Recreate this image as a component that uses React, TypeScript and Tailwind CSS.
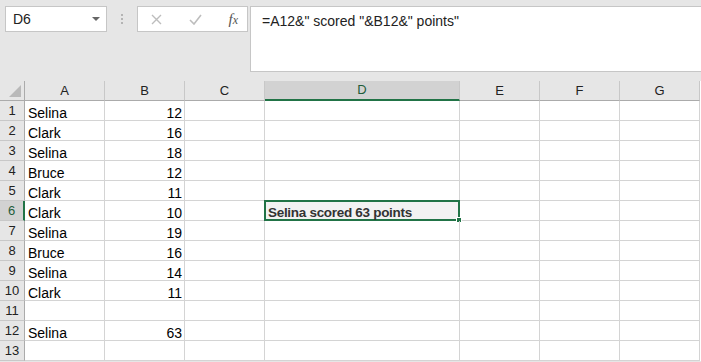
import { Fragment } from 'react';

const columns = [
    { key: 'A', width: 80 },
    { key: 'B', width: 80 },
    { key: 'C', width: 80 },
    { key: 'D', width: 195 },
    { key: 'E', width: 80 },
    { key: 'F', width: 80 },
    { key: 'G', width: 80 },
];

const rows: { a?: string; b?: string }[] = [
    { a: 'Selina', b: '12' },
    { a: 'Clark', b: '16' },
    { a: 'Selina', b: '18' },
    { a: 'Bruce', b: '12' },
    { a: 'Clark', b: '11' },
    { a: 'Clark', b: '10' },
    { a: 'Selina', b: '19' },
    { a: 'Bruce', b: '16' },
    { a: 'Selina', b: '14' },
    { a: 'Clark', b: '11' },
    {},
    { a: 'Selina', b: '63' },
    {},
];

const ColumnHeader = ({ label, active }: { label: string; active?: boolean }) => (
    <div
        className={`h-[20px] flex items-center justify-center text-[13px] border-r border-[#c8c8c8] ${active ? 'bg-[#d2d2d2] text-[#1e5c3a] border-b-2 border-b-[#217346]' : 'bg-[#e6e6e6] text-[#222] border-b border-b-[#ababab]'}`}
    >
        {label}
    </div>
);

const FormulaButtons = () => (
    <div className="w-[111px] h-[26px] bg-white border border-[#c6c6c6] flex items-center justify-between pl-[13px] pr-[9px]">
        <svg width="11" height="11" viewBox="0 0 11 11">
            <path d="M1 1 L10 10 M10 1 L1 10" stroke="#bdbdbd" strokeWidth="1.4" />
        </svg>
        <svg width="13" height="11" viewBox="0 0 13 11">
            <path d="M1 6 L5 10 L12 1" stroke="#bdbdbd" strokeWidth="1.6" fill="none" />
        </svg>
        <span className="text-[15px] italic text-[#555]" style={{ fontFamily: '"Liberation Serif", serif' }}>
            f<span className="text-[12px]">x</span>
        </span>
    </div>
);

export default function App() {
    return (
        <div className="w-[701px] h-[362px] overflow-hidden bg-[#e6e6e6]" style={{ fontFamily: '"Liberation Sans", Arial, sans-serif' }}>
            {/* toolbar */}
            <div className="h-[81px] flex items-start pt-[6px]">
                <div className="ml-[5px] w-[102px] h-[26px] bg-white border border-[#c6c6c6] flex items-center justify-between pl-[7px] pr-[6px]">
                    <span className="text-[14px] text-[#222]">D6</span>
                    <svg width="8" height="5" viewBox="0 0 8 5">
                        <path d="M0 0 H8 L4 4 Z" fill="#666" />
                    </svg>
                </div>
                <div className="w-[30px] h-[26px] flex flex-col items-center justify-center gap-[2px]">
                    <div className="w-[2px] h-[2px] bg-[#b4b4b4]" />
                    <div className="w-[2px] h-[2px] bg-[#b4b4b4]" />
                    <div className="w-[2px] h-[2px] bg-[#b4b4b4]" />
                </div>
                <FormulaButtons />
                <div className="ml-[2px] flex-1 h-[66px] bg-white border border-[#c6c6c6] border-r-0 pl-[11px] pt-[4px] text-[14px] text-[#222]">
                    =A12&amp;" scored "&amp;B12&amp;" points"
                </div>
            </div>

            {/* sheet */}
            <div className="grid bg-white" style={{ gridTemplateColumns: '25px 80px 80px 80px 195px 80px 80px 80px' }}>
                <div className="h-[20px] bg-[#e6e6e6] border-r border-[#ababab] border-b border-b-[#ababab] flex items-end justify-end p-[3px]">
                    <svg width="12" height="12" viewBox="0 0 12 12">
                        <path d="M12 0 V12 H0 Z" fill="#b9b9b9" />
                    </svg>
                </div>
                {columns.map(c => (
                    <ColumnHeader key={c.key} label={c.key} active={c.key === 'D'} />
                ))}

                {rows.map((r, i) => {
                    const n = i + 1;
                    const active = n === 6;
                    return (
                        <Fragment key={n}>
                            <div
                                className={`h-[20px] flex items-center justify-center text-[13px] border-b border-[#c8c8c8] ${active ? 'bg-[#d2d2d2] text-[#1e5c3a] border-r-2 border-r-[#217346]' : 'bg-[#e6e6e6] text-[#222] border-r border-r-[#ababab]'}`}
                            >
                                {n}
                            </div>
                            <div className="h-[20px] border-r border-b border-[#d4d4d4] pl-[3px] flex items-end leading-none text-[14px] text-black">
                                {r.a}
                            </div>
                            <div className="h-[20px] border-r border-b border-[#d4d4d4] pr-[2px] flex items-end justify-end leading-none text-[14px] text-black">
                                {r.b}
                            </div>
                            <div className="h-[20px] border-r border-b border-[#d4d4d4]" />
                            <div className="h-[20px] border-r border-b border-[#d4d4d4] relative">
                                {active && (
                                    <div className="absolute -left-[1px] -top-[1px] -right-[1px] -bottom-[1px] border-2 border-[#217346] bg-[#f2f2f2] flex items-end pl-[2px] leading-none text-[13.5px] tracking-[-0.3px] font-bold text-[#333]">
                                        Selina scored 63 points
                                        <div className="absolute -right-[4px] -bottom-[4px] w-[6px] h-[6px] bg-[#217346] border border-white" />
                                    </div>
                                )}
                            </div>
                            <div className="h-[20px] border-r border-b border-[#d4d4d4]" />
                            <div className="h-[20px] border-r border-b border-[#d4d4d4]" />
                            <div className="h-[20px] border-r border-b border-[#d4d4d4]" />
                        </Fragment>
                    );
                })}
            </div>
        </div>
    );
}
